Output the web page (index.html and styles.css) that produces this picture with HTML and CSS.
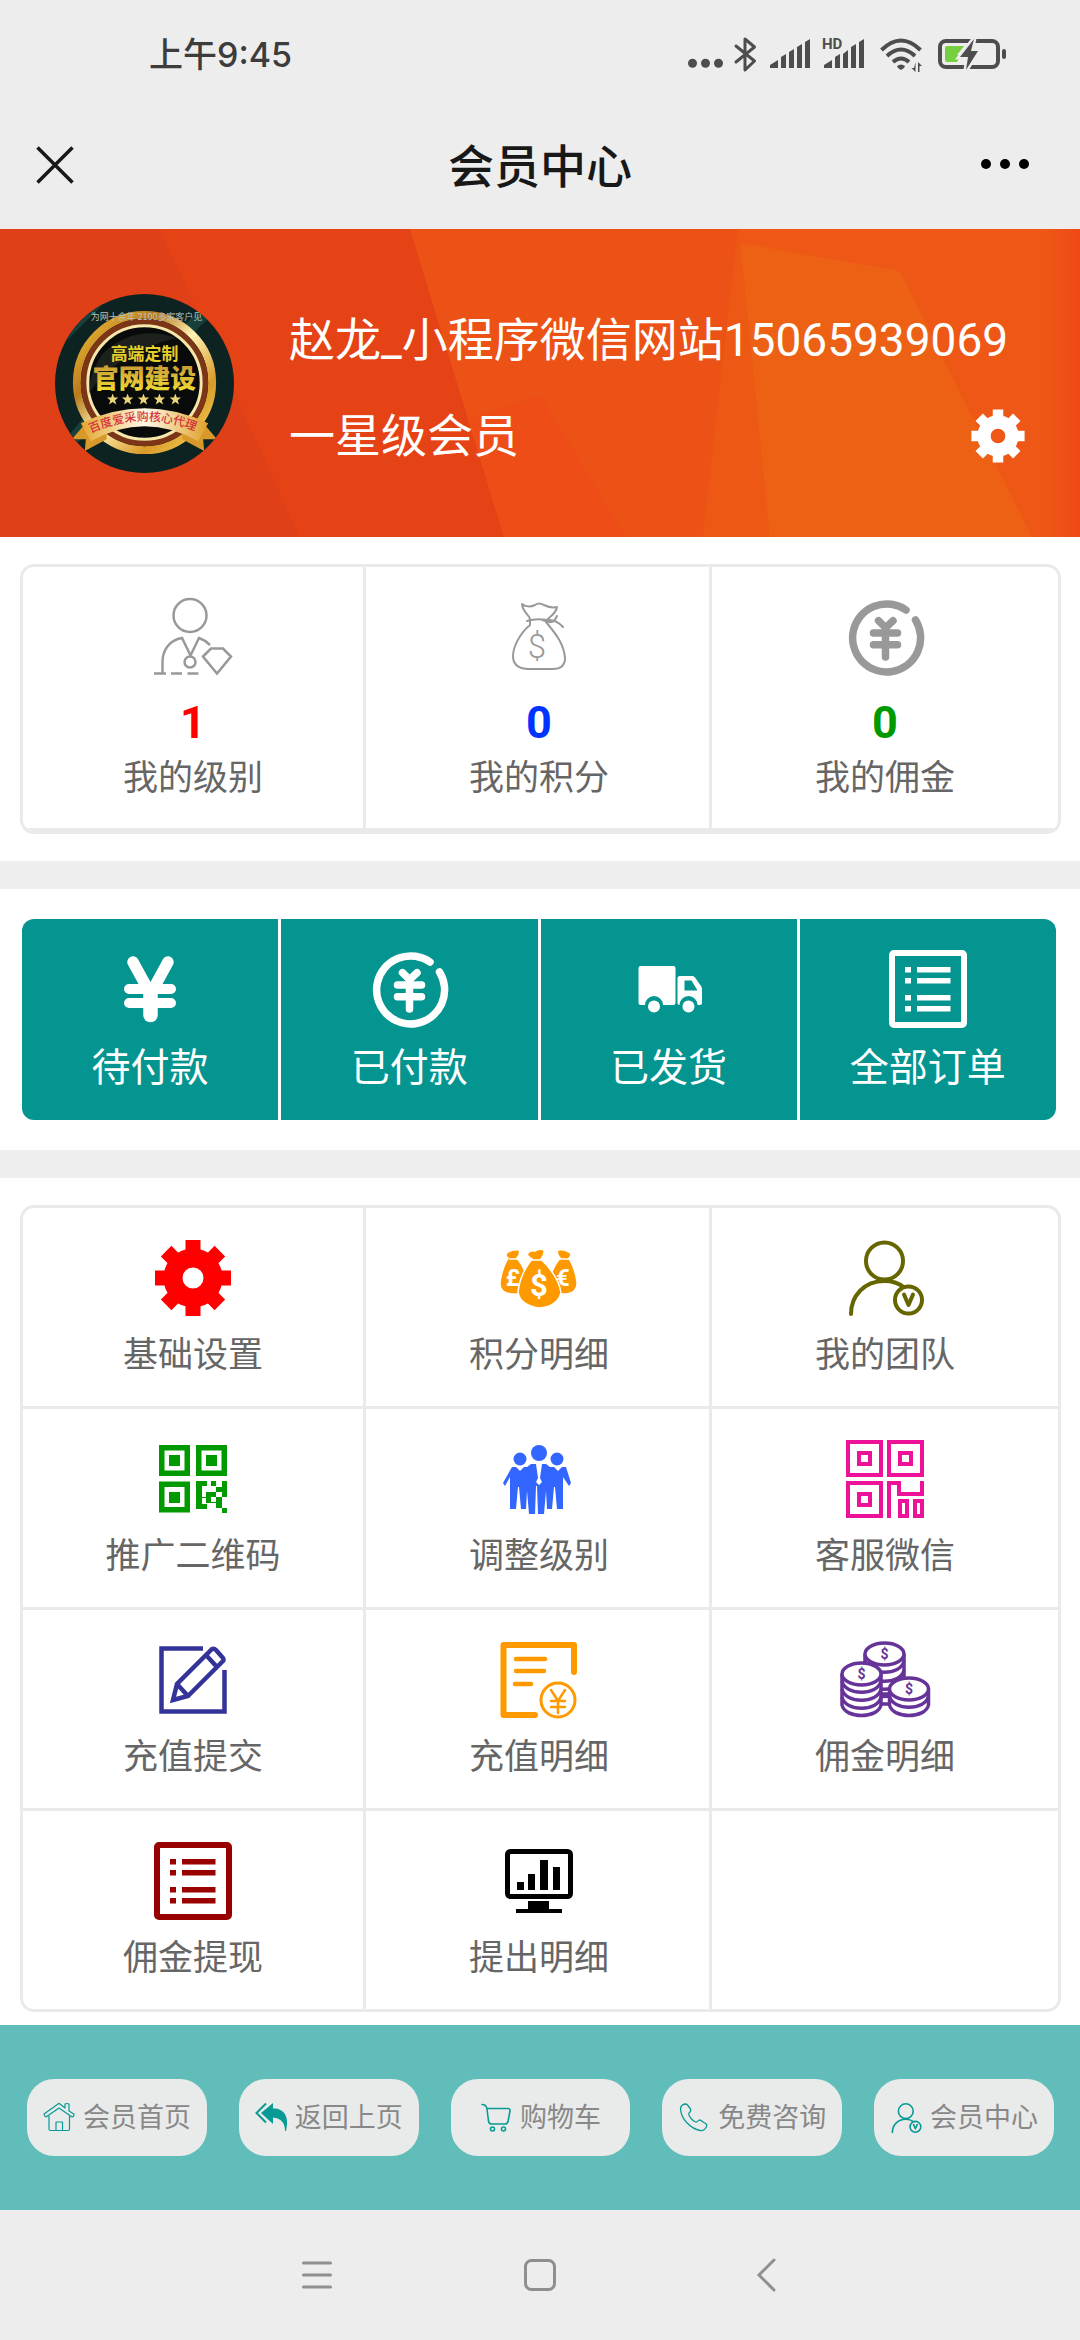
FILE: index.html
```html
<!DOCTYPE html>
<html lang="zh-CN">
<head>
<meta charset="utf-8">
<meta name="viewport" content="width=device-width">
<title>会员中心</title>
<link rel="stylesheet" href="styles.css">
</head>
<body>
<svg class="sprite" aria-hidden="true">
  <symbol id="gear" viewBox="0 0 80 80">
    <circle cx="40" cy="40" r="20" fill="none" stroke="currentColor" stroke-width="19"/>
    <g fill="currentColor">
      <path d="M32.5 2h15v10q1 3 4 4v6h-23v-6q3-1 4-4z"/>
      <path d="M32.5 2h15v10q1 3 4 4v6h-23v-6q3-1 4-4z" transform="rotate(45 40 40)"/>
      <path d="M32.5 2h15v10q1 3 4 4v6h-23v-6q3-1 4-4z" transform="rotate(90 40 40)"/>
      <path d="M32.5 2h15v10q1 3 4 4v6h-23v-6q3-1 4-4z" transform="rotate(135 40 40)"/>
      <path d="M32.5 2h15v10q1 3 4 4v6h-23v-6q3-1 4-4z" transform="rotate(180 40 40)"/>
      <path d="M32.5 2h15v10q1 3 4 4v6h-23v-6q3-1 4-4z" transform="rotate(225 40 40)"/>
      <path d="M32.5 2h15v10q1 3 4 4v6h-23v-6q3-1 4-4z" transform="rotate(270 40 40)"/>
      <path d="M32.5 2h15v10q1 3 4 4v6h-23v-6q3-1 4-4z" transform="rotate(315 40 40)"/>
    </g>
  </symbol>
  <symbol id="yen-circle" viewBox="0 0 80 80">
    <g fill="none" stroke="currentColor" stroke-linecap="round" stroke-linejoin="round" stroke-width="7.5">
      <path d="M61 13A34 34 0 1 0 70.5 23"/>
      <path d="M33.5 23.7l7 7 7.5-7M40.5 31v29M28.5 36h24M28.5 47.7h24"/>
    </g>
  </symbol>
  <symbol id="list" viewBox="0 0 80 80">
    <rect x="4" y="4" width="72" height="72" rx="2" fill="none" stroke="currentColor" stroke-width="6"/>
    <path fill="currentColor" d="M17 18h6v5.500h-6zM29 18h33.500v5.500H29zM17 29h6v5.500h-6zM29 29h33.500v5.500H29zM17 46h6v5.500h-6zM29 46h33.500v5.500H29zM17 57h6v5.500h-6zM29 57h33.500v5.500H29z"/>
  </symbol>
  <symbol id="member" viewBox="0 0 80 80">
    <g fill="none" stroke="currentColor" stroke-width="4" stroke-linecap="round">
      <circle cx="39.500" cy="23" r="18.500"/>
      <path d="M6 76C6 58 19 43 39.500 43c8 0 14 2 19 6"/>
      <circle cx="63.500" cy="62" r="13.500"/>
      <path d="M59 56.500l4.500 10.500 4.500-10.500" stroke-linejoin="round"/>
    </g>
  </symbol>
</svg>

<div class="page">
  <header class="top">
    <div class="status">
      <span class="clock">上午9:45</span>
      <svg class="status-icons" viewBox="0 0 320 36" aria-hidden="true">
        <g fill="#4d4d4d">
          <circle cx="4.500" cy="26.300" r="4.500"/><circle cx="17.500" cy="26.300" r="4.500"/><circle cx="30.500" cy="26.300" r="4.500"/>
          <path d="M48 9l18.500 15L57 33V2l9.500 8L48 25" fill="none" stroke="#4d4d4d" stroke-width="3" stroke-linejoin="round" stroke-linecap="round"/>
          <path d="M82 31v-3l8-5v8zM93 31V20l5-3v14zM101 31V15l5-3v19zM109 31V10l5-3v24zM117 31V5l5-3v29z"/>
          <path d="M136 31v-3l8-5v8zM147 31V20l5-3v14zM155 31V17l5-4v18zM163 31V10l5-3v24zM171 31V5l5-3v29z"/>
          <text class="hd" x="134" y="12">HD</text>
          <g fill="none" stroke="#4d4d4d" stroke-width="4"><path d="M193.500 13Q213-6 232.500 13"/><path d="M199 19q14-13 28 0"/><path d="M205 25q8-7 16 0"/></g>
          <path d="M209 29q4-3 8 0l-1 2-3 2-3-2z"/>
          <path d="M227.500 25v10l-4-4h2.500zM230 35V25l4 4h-2.500v6z"/>
          <rect x="252" y="4" width="58" height="26" rx="6" fill="none" stroke="#4d4d4d" stroke-width="4"/>
          <rect x="314" y="12" width="4" height="10" rx="2"/>
          <path fill="#76cf3f" d="M259 9h17l-7 9h4l-4 7h-10q-2 0-2-2V11q0-2 2-2z"/>
          <path d="M286 2l-14 18h8l-2 13 12-19h-7z" stroke="#ededed" stroke-width="5" paint-order="stroke"/>
        </g>
      </svg>
    </div>
    <div class="titlebar">
      <button class="icon-button" type="button" aria-label="关闭">
        <svg width="38" height="38" viewBox="0 0 38 38"><path d="M1.500 1.500l35 35M36.500 1.500l-35 35" stroke="#181818" stroke-width="3.500"/></svg>
      </button>
      <h1 class="title">会员中心</h1>
      <button class="icon-button icon-button-end" type="button" aria-label="更多">
        <svg width="50" height="38" viewBox="0 0 50 38"><circle cx="6" cy="18" r="5"/><circle cx="25" cy="18" r="5"/><circle cx="44" cy="18" r="5"/></svg>
      </button>
    </div>
  </header>

  <main>
    <section class="profile">
      <svg class="profile-bg" viewBox="0 0 1080 308" preserveAspectRatio="none" aria-hidden="true">
        <defs><linearGradient id="edge"><stop offset="0" stop-color="#ee5716"/><stop offset="1" stop-color="#ee4917"/></linearGradient></defs>
        <rect width="1080" height="308" fill="#e04018"/>
        <path fill="#e54316" d="M160 0h920v308H300z"/>
        <path fill="#ec5216" d="M410 0h670v308H504z"/>
        <path fill="#ee4d17" d="M504 308L470 190l70-24 86 142z"/>
        <path fill="#ed5915" d="M738 0h342v308H703z"/>
        <path fill="#ed6115" d="M740 10l160 32 132 266H770z"/>
        <path fill="#ee5716" d="M738 0h342v308h-48L900 42 740 14z"/>
        <path fill="url(#edge)" d="M1044 0h36v308h-36z"/>
      </svg>
      <svg class="avatar" viewBox="0 0 180 180" role="img" aria-label="头像">
        <defs>
          <clipPath id="disc"><circle cx="90" cy="90" r="90"/></clipPath>
          <linearGradient id="gold" x1="0" y1="0" x2="1" y2="1"><stop offset="0" stop-color="#f3c23c"/><stop offset=".3" stop-color="#b97a1c"/><stop offset=".5" stop-color="#fff3b5"/><stop offset=".75" stop-color="#d99a28"/><stop offset="1" stop-color="#f8dc62"/></linearGradient>
          <linearGradient id="gold-text" x1="0" y1="0" x2="0" y2="1"><stop offset="0" stop-color="#c99a35"/><stop offset="1" stop-color="#f4e334"/></linearGradient>
          <linearGradient id="ribbon" x1="0" y1="0" x2="1" y2="0"><stop offset="0" stop-color="#e3a52c"/><stop offset=".5" stop-color="#fffbe8"/><stop offset="1" stop-color="#dfa029"/></linearGradient>
          <path id="ribbon-line" d="M36 140Q90 115 146 140"/>
          <path id="star" d="M0-6l1.500 4.100 4.200.1-3.300 2.600 1.200 4.200L0 2.500-3.600 5l1.200-4.200-3.300-2.600 4.200-.1z"/>
        </defs>
        <g clip-path="url(#disc)">
          <rect width="180" height="180" fill="#0c2322"/>
          <path d="M-10 60L60-10M-10 180L40 120M130 190l60-70M120 50l60-60" stroke="#17403a" stroke-width="12"/>
          <circle cx="90" cy="89" r="68" fill="#080b0a" stroke="url(#gold)" stroke-width="8"/>
          <circle cx="90" cy="89" r="61" fill="none" stroke="#7c3517" stroke-width="6"/>
          <circle cx="90" cy="89" r="57" fill="none" stroke="#f6e7ab" stroke-width="3"/>
          <path d="M34 100Q60 60 122 44Q80 30 48 60Q34 80 34 100z" fill="#2b302a" opacity=".6"/>
          <text class="av-top" x="92" y="26">为网十余年 2100多家客户见</text>
          <text class="av-line" x="90" y="66" fill="#e4cf2c">高端定制</text>
          <text class="av-main" x="90" y="95" fill="url(#gold-text)">官网建设</text>
          <g fill="#ecd67c"><use href="#star" x="58" y="106"/><use href="#star" x="73" y="106"/><use href="#star" x="89" y="106"/><use href="#star" x="105" y="106"/><use href="#star" x="121" y="106"/></g>
          <path fill="#d8992a" d="M17 146l13-15 22-3v18l-22 12 1-12zM163 146l-13-15-22-3v18l22 12-1-12z"/>
          <path fill="url(#ribbon)" d="M26 130Q90 100 154 130l-10 18Q90 118 36 148z"/>
          <text class="av-ribbon"><textPath href="#ribbon-line">百度爱采购核心代理</textPath></text>
        </g>
      </svg>
      <div class="who">
        <p class="who-line">赵龙_小程序微信网站15065939069</p>
        <div class="who-line who-level">
          <span>一星级会员</span>
          <a class="settings" href="#settings" aria-label="设置"><svg class="settings-icon"><use href="#gear"/></svg></a>
        </div>
      </div>
    </section>

    <section class="block">
      <div class="card">
        <div class="cells stats">
          <a class="cell" href="#level">
            <svg class="icon c-gray" viewBox="0 0 80 80"><g fill="none" stroke="currentColor" stroke-width="2.500"><circle cx="37" cy="18.500" r="16.500"/><path d="M9.500 76V65c0-12 7-22 19.500-24l8.500 17.500L46 41q6 2 11 7"/><circle cx="37" cy="65" r="5.500"/><path d="M1 76.500h12M18 76.500h11M34.500 76.500h11"/><path d="M50 59.500l8-8h12l8 8-14 17z"/></g></svg>
            <strong class="num c-red">1</strong><span class="label">我的级别</span>
          </a>
          <a class="cell" href="#points">
            <svg class="icon c-gray" viewBox="0 0 80 80"><g fill="none" stroke="currentColor" stroke-width="2" stroke-linecap="round" stroke-linejoin="round"><path d="M31 23c1-4-8-8-8-16 3 3 9 3 13 1 8-5 10 5 22 2-1 7-7 9-10 13"/><path d="M28 24c6-2 14-2 20-1q9-1 16 7M58 19q-3 7-8 6l-7-2"/><path d="M31 23v5C21 36 14 50 14 59q0 12 14 13h26q12 0 12-11C65 47 57 37 47 25"/></g><text class="cur thin" x="38" y="61" font-size="33">$</text></svg>
            <strong class="num c-blue">0</strong><span class="label">我的积分</span>
          </a>
          <a class="cell" href="#commission">
            <svg class="icon c-gray"><use href="#yen-circle"/></svg>
            <strong class="num c-green">0</strong><span class="label">我的佣金</span>
          </a>
        </div>
      </div>
    </section>

    <nav class="block block-orders" aria-label="订单">
      <div class="orders">
        <a class="order" href="#unpaid"><svg class="icon" viewBox="0 0 80 80"><g fill="none" stroke="currentColor" stroke-linecap="round"><path stroke-width="11.500" d="M23 13l17.500 32M58 13L40.500 45"/><path stroke-width="10" d="M19 40h42M19 54h42"/><path stroke-width="14.500" d="M40.500 46v20"/></g></svg><span>待付款</span></a>
        <a class="order" href="#paid"><svg class="icon"><use href="#yen-circle"/></svg><span>已付款</span></a>
        <a class="order" href="#shipped"><svg class="icon" viewBox="0 0 80 80"><g fill="currentColor"><path d="M11.500 17h33q2 0 2 2v35q0 2-2 2H34a9 9 0 0 0-18 0h-4.500q-2 0-2-2V19q0-2 2-2z"/><circle cx="25" cy="57.500" r="6"/><path fill-rule="evenodd" d="M51 27h12.500q1.500 0 2.500 1.500l6 8.500q1 1.500 1 3v14q0 2-2 2h-2.500a9 9 0 0 0-18 0q-2 0-2-2V29.500q0-2.500 2.500-2.500zM55.500 31.500v10h13l-6-10z"/><circle cx="59.500" cy="57.500" r="6"/></g></svg><span>已发货</span></a>
        <a class="order" href="#orders"><svg class="icon"><use href="#list"/></svg><span>全部订单</span></a>
      </div>
    </nav>

    <nav class="block block-menu" aria-label="会员功能">
      <div class="card">
        <div class="cells menu">
          <a class="cell" href="#basic"><svg class="icon" color="#ff0000"><use href="#gear"/></svg><span class="label">基础设置</span></a>
          <a class="cell" href="#point-log"><svg class="icon" viewBox="0 0 80 80" color="#ff9900"><g fill="currentColor" stroke="#fff" stroke-width="1.500"><path d="M9 20q-4-3 0-6 5-3 11-2 2 3-2 8 8 10 10 20l-4 16H13Q0 55 1 44q2-14 8-24z"/><path d="M70 20q4-3 0-6-5-3-11-2-2 3 2 8-8 10-10 20l4 16h11q13-1 12-12-2-14-8-24z"/><path d="M33 21q-6-3-4-6 2-3 7-2 4-3 9-1 1 4-3 9 18 18 20 34-4 14-22 15-19-3-21-16 2-18 14-33z"/></g><path d="M10 21h9M61 21h9M32 22h12" stroke="#fff" stroke-width="1.500"/><text class="cur paper" x="14" y="48" font-size="24">£</text><text class="cur paper" x="64" y="48" font-size="24">€</text><text class="cur paper" x="40" y="58" font-size="31">$</text></svg><span class="label">积分明细</span></a>
          <a class="cell" href="#team"><svg class="icon" color="#666600"><use href="#member"/></svg><span class="label">我的团队</span></a>

          <a class="cell" href="#promo"><svg class="icon" viewBox="0 0 80 80" color="#009900"><g fill="none" stroke="currentColor" stroke-width="5.500"><path d="M8.750 8.750h25.500v25.500H8.750zM45.750 8.750h25.500v25.500h-25.500zM8.750 45.250h25.500v25.500H8.750z"/></g><path fill="currentColor" d="M16 16h11v11H16zM53 16h11v11H53zM16 53h11v11H16zM43 42h11v5h-5v11h4v-5h10v-5h6v-6h5v16h-5v-5h-6v5h-5v5h5v6h6v5h5v0h-5v-5h-6v-5h-10v-5h-4v6h5v5H43zM58 42h5v5h-5zM63 58h6v11h-6zM69 69h5v5h-5z"/></svg><span class="label">推广二维码</span></a>
          <a class="cell" href="#grade"><svg class="icon" viewBox="0 0 80 80" color="#3366ff"><g fill="currentColor"><circle cx="40" cy="14" r="8"/><circle cx="21" cy="20" r="6.500"/><circle cx="58" cy="20" r="6.500"/><path d="M13 28h4l4 4 4-4h3l4-3h5l2 14-2 4 3 3 3-3-2-4 2-14h4l4 3h4l4 4 4-4h4l5 16-2 3-6-9v32h-6l-2-22h-1l-2 22h-5l-1-18-2 23h-6l-1-28h-1l-1 28h-6l-2-23-1 18h-5l-2-22h-1l-2 22h-6V38l-5 9-2-3z"/></g></svg><span class="label">调整级别</span></a>
          <a class="cell" href="#service"><svg class="icon" viewBox="0 0 80 80" color="#ee1199"><g fill="none" stroke="currentColor" stroke-width="4"><path d="M3 3h33v33H3zM44 3h33v33H44zM3 44h33v33H3zM14 14h11v11H14zM55 14h11v11H55zM14 55h11v11H14zM44 79V44h10v11h23V42"/><path d="M55 62h7v15h-7zM70 62h7v15h-7z"/></g></svg><span class="label">客服微信</span></a>

          <a class="cell" href="#recharge"><svg class="icon" viewBox="0 0 80 80" color="#333399"><g fill="none" stroke="currentColor" stroke-width="4.500"><path d="M50 8.500H8.500v63h63V30"/><path d="M20 60l4-16L59 9q2-1 4 1l7 8q1 2 0 3L35 56zM24 44l11 12M53 15l11 12"/></g></svg><span class="label">充值提交</span></a>
          <a class="cell" href="#recharge-log"><svg class="icon" viewBox="0 0 80 80" color="#ff9900"><g fill="none" stroke="currentColor" stroke-width="5.500" stroke-linecap="round"><path stroke-linejoin="round" d="M36 75H4.500V5H75v27" stroke-width="6"/><path stroke-width="4.500" d="M17 19h29M17 31h28M16 44h16"/><circle cx="59" cy="60" r="17" stroke-width="3"/><path stroke-width="2.500" d="M52 50l7 11 7-11M59 61v12M52 61h14M52 67h14"/></g></svg><span class="label">充值明细</span></a>
          <a class="cell" href="#commission-log"><svg class="icon" viewBox="0 0 80 80" color="#663399"><g fill="#fff" stroke="currentColor" stroke-width="3.500">
            <path d="M20 14v40h39V14"/><path fill="none" d="M20 21c3 15 36 15 39 0M20 30c3 15 36 15 39 0M20 38c3 15 36 15 39 0M32 56c10 1 16 0 20-2M34 64h14"/><ellipse cx="39.500" cy="14" rx="19.500" ry="11"/>
            <path d="M-3 34v31c3 14 36 14 39 0V34"/><path fill="none" d="M-3 41c3 15 36 15 39 0M-3 49c3 15 36 15 39 0M-3 57c3 15 36 15 39 0"/><ellipse cx="16.500" cy="34" rx="19.500" ry="11"/>
            <path d="M44.500 49v16c3 14 36 14 39 0V49"/><path fill="none" d="M44.500 56c3 15 36 15 39 0"/><ellipse cx="64" cy="49" rx="19.500" ry="11"/></g>
            <text class="cur" x="39.500" y="19" font-size="14">$</text><text class="cur" x="16.500" y="39" font-size="14">$</text><text class="cur" x="64" y="54" font-size="14">$</text></svg><span class="label">佣金明细</span></a>

          <a class="cell" href="#withdraw"><svg class="icon" color="#990000"><use href="#list"/></svg><span class="label">佣金提现</span></a>
          <a class="cell" href="#withdraw-log"><svg class="icon" viewBox="0 0 80 80"><rect x="8.500" y="10.500" width="63" height="45" rx="3" fill="none" stroke="#000" stroke-width="5"/><path d="M18 41h7v8h-7zM29 33h7v16h-7zM41 19h8v30h-8zM54 26h7v23h-7zM29 60h21v8h13v4H17v-4h12z"/></svg><span class="label">提出明细</span></a>
          <div class="cell"></div>
        </div>
      </div>
    </nav>
  </main>

  <nav class="tabs" aria-label="快捷导航">
    <a class="tab" href="#home"><svg class="tab-icon" viewBox="0 0 32 32"><g fill="none" stroke="currentColor" stroke-width="1.200" stroke-linejoin="round"><path d="M1 12L15 2q1-1 2 0l5 4V2q2-1 4 0v7l5 3q0 3-2 3L16 6 3 15q-2-1-2-3z"/><path d="M6 14v13q0 1.500 1.500 1.500H25q1.500 0 1.500-1.500V14M13 28.500V20h6.500v8.500"/></g></svg><span>会员首页</span></a>
    <a class="tab" href="#back"><svg class="tab-icon" viewBox="0 0 32 32"><path fill="none" stroke="currentColor" stroke-width="2" d="M11 1.500L1.500 11 11 20.500"/><path fill="currentColor" d="M18 1v5.500c10-.5 17 7 13 22.500h-1c0-8-4-13-12-13.500V22L6 11z"/></svg><span>返回上页</span></a>
    <a class="tab" href="#cart"><svg class="tab-icon" viewBox="0 0 32 32"><g fill="none" stroke="currentColor" stroke-width="1.600" stroke-linecap="round"><path d="M2 2.500c3 0 4.500 1 5 4.500l1.500 12q.5 3 3 3H25q2.500 0 3-2.500L30 9q.3-2.500-2-2.500H7"/><circle cx="12.500" cy="27" r="2"/><circle cx="23.500" cy="27" r="2"/></g></svg><span>购物车</span></a>
    <a class="tab" href="#consult"><svg class="tab-icon" viewBox="0 0 32 32"><path fill="none" stroke="currentColor" stroke-width="1.300" stroke-linejoin="round" d="M2.500 6q1-3.500 4.500-4 2 0 2.500 1l3 4q.8 1.500-.5 3-1.500 1.200-1.200 2.500c1.500 4 3.500 6 7 7.500 1.500.5 2-1.500 3.500-2 1 0 1.500 0 3 1.500l4 2.500q1 1 0 3-2 4-6 3.500C13 27 2.500 17 2.500 6z"/></svg><span>免费咨询</span></a>
    <a class="tab" href="#member-center"><svg class="tab-icon"><use href="#member"/></svg><span>会员中心</span></a>
  </nav>

  <footer class="system">
    <button class="sys-button" type="button" aria-label="任务"><svg width="34" height="34" viewBox="0 0 34 34"><path d="M3.500 5h27M3.500 17h27M3.500 29h27"/></svg></button>
    <button class="sys-button" type="button" aria-label="主页"><svg width="34" height="34" viewBox="0 0 34 34"><rect x="2.500" y="2.500" width="29" height="29" rx="6"/></svg></button>
    <button class="sys-button" type="button" aria-label="返回"><svg width="34" height="34" viewBox="0 0 34 34"><path d="M28 2L13 17l15 15"/></svg></button>
  </footer>
</div>
</body>
</html>
```

FILE: styles.css
```css
* {
  box-sizing: border-box;
}

body {
  margin: 0;
  background: #fff;
  font-family: Roboto, "Noto Sans CJK SC", sans-serif;
  color: #666;
}

a {
  color: inherit;
  text-decoration: none;
}

button {
  border: 0;
  padding: 0;
  background: none;
  font: inherit;
}

svg {
  display: block;
  overflow: visible;
}

.sprite {
  display: none;
}

.page {
  display: flex;
  flex-direction: column;
  min-height: 100vh;
}

/* Status bar and title */
.top {
  background: #ededed;
}

.status {
  display: flex;
  align-items: center;
  justify-content: space-between;
  height: 109px;
  padding: 0 72px 0 149px;
}

.clock {
  padding-bottom: 4px;
  font-family: Inter, "Noto Sans CJK SC", sans-serif;
  font-size: 34px;
  font-weight: 500;
  color: #3c3c3c;
}

.status-icons {
  width: 320px;
  height: 36px;
}

.hd {
  font-size: 15px;
  font-weight: 700;
}

.titlebar {
  display: grid;
  grid-template-columns: 1fr auto 1fr;
  align-items: center;
  height: 120px;
  padding: 0 36px 9px;
}

.icon-button-end {
  justify-self: end;
  padding-right: 14px;
}

.title {
  margin: 0;
  padding-top: 4px;
  font-size: 46px;
  font-weight: 500;
  line-height: 60px;
  color: #181818;
}

/* Profile banner */
.profile {
  position: relative;
  display: flex;
  align-items: center;
  gap: 55px;
  height: 308px;
  padding: 0 54px 0 55px;
  color: #fff;
}

.profile-bg {
  position: absolute;
  inset: 0;
  width: 100%;
  height: 100%;
}

.avatar {
  position: relative;
  flex: none;
  width: 179px;
  height: 179px;
}

.av-top,
.av-line,
.av-main {
  text-anchor: middle;
}

.av-top {
  font-family: "Noto Sans CJK SC", sans-serif;
  font-size: 9px;
  fill: #b9c2bb;
}

.av-line {
  font-size: 17px;
  font-weight: 700;
}

.av-main {
  font-size: 26px;
  font-weight: 900;
}

.av-ribbon {
  font-size: 12px;
  font-weight: 500;
  fill: #d4323c;
}

.who {
  position: relative;
  flex: 1;
  padding-top: 10px;
}

.who-line {
  margin: 0;
  font-size: 46px;
  line-height: 96px;
  white-space: nowrap;
}

.who-level {
  display: flex;
  align-items: center;
  justify-content: space-between;
}

.settings-icon {
  width: 56px;
  height: 56px;
}

/* White blocks split by gray bands */
.block {
  padding: 27px 19px 27px 20px;
  border-bottom: 28px solid #eee;
}

.block-orders {
  padding: 30px 24px 30px 22px;
}

.block-menu {
  padding-bottom: 13px;
  border-bottom: 0;
}

.card {
  overflow: hidden;
  border: 3px solid #eaeaea;
  border-radius: 14px;
}

.cells {
  display: grid;
  grid-template-columns: repeat(3, 1fr);
  margin-left: -3px;
}

.cell {
  display: flex;
  flex-direction: column;
  align-items: center;
  border-bottom: 3px solid #eaeaea;
  box-shadow: inset -3px 0 #eaeaea;
}

.cell:nth-child(3n) {
  box-shadow: none;
}

.stats .cell {
  padding: 30px 0 24px;
}

.menu .cell {
  padding: 30px 0 25px;
}

.menu .cell:nth-last-child(-n + 3) {
  border-bottom: 0;
}

.icon {
  width: 80px;
  height: 80px;
}

.num {
  margin-top: 19px;
  font-size: 45px;
  font-weight: 700;
  line-height: 54px;
}

.label {
  font-size: 35px;
  line-height: 50px;
}

.stats .label {
  margin-top: 4px;
}

.menu .label {
  margin-top: 13px;
}

.c-gray {
  color: #999;
}

.c-red {
  color: #f00;
}

.c-blue {
  color: #03f;
}

.c-green {
  color: #090;
}

.cur {
  font-weight: 700;
  text-anchor: middle;
  fill: currentColor;
}

.thin {
  font-weight: 300;
}

.paper {
  fill: #fff;
}

/* Orders */
.orders {
  display: grid;
  grid-template-columns: repeat(4, 1fr);
  gap: 3px;
  overflow: hidden;
  border-radius: 12px;
}

.order {
  display: flex;
  flex-direction: column;
  align-items: center;
  gap: 14px;
  padding: 30px 0 27px;
  background: #049590;
  font-size: 39px;
  line-height: 50px;
  color: #fff;
}

/* Shortcut bar */
.tabs {
  display: grid;
  grid-template-columns: repeat(5, 1fr);
  gap: 32px;
  padding: 54px 26px 54px 27px;
  background: #60bdb9;
}

.tab {
  display: flex;
  align-items: center;
  justify-content: center;
  gap: 8px;
  height: 77px;
  border-radius: 27px;
  background: #e9ebea;
  font-size: 27px;
  line-height: 40px;
  white-space: nowrap;
  color: #888;
}

.tab-icon {
  flex: none;
  width: 32px;
  height: 32px;
  color: #089a95;
}

/* System navigation */
.system {
  display: grid;
  flex: 1;
  grid-template-columns: repeat(3, 1fr);
  justify-items: center;
  align-items: center;
  min-height: 130px;
  padding: 0 19%;
  background: #ededed;
}

.sys-button svg {
  fill: none;
  stroke: #8f8f8f;
  stroke-width: 3;
  stroke-linecap: round;
}
```
